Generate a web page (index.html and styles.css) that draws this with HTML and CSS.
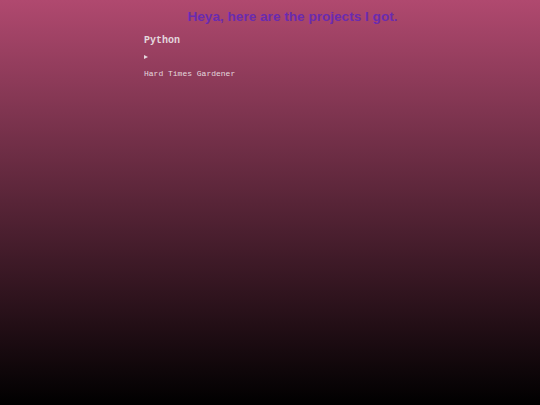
FILE: index.html
```html
<!DOCTYPE html>
<html>
<head>
<meta charset="utf-8">
<link rel="stylesheet" href="styles.css">
</head>
<body>
<main class="page">
  <h1 class="title">Heya, here are the projects I got.</h1>
  <section class="group">
    <h2 class="group-name">Python</h2>
    <div class="marker"><span class="tri"></span></div>
    <p class="project">Hard Times Gardener</p>
  </section>
</main>
</body>
</html>
```
FILE: styles.css
```css
html, body {
  margin: 0;
  height: 100%;
}
body {
  background: linear-gradient(to bottom, #b0496f 0%, #000000 100%);
  font-family: "Liberation Mono", "Courier New", monospace;
  color: #e4d8de;
}
.page {
  padding: 8px 0 0 144px;
  width: 297px;
}
.title {
  margin: 0;
  text-align: center;
  font-family: "Liberation Sans", Arial, sans-serif;
  font-size: 13.6px;
  font-weight: bold;
  color: #6a2bb0;
  line-height: 18px;
}
.group {
  margin-top: 9px;
}
.group-name {
  margin: 0;
  font-size: 10px;
  font-weight: bold;
  line-height: 12px;
}
.marker {
  margin-top: 6px;
  height: 8px;
  display: flex;
  align-items: center;
}
.tri {
  width: 0;
  height: 0;
  border-left: 4px solid #e4d8de;
  border-top: 2.5px solid transparent;
  border-bottom: 2.5px solid transparent;
}
.project {
  margin: 8px 0 0;
  font-size: 8px;
  line-height: 10px;
}
```
